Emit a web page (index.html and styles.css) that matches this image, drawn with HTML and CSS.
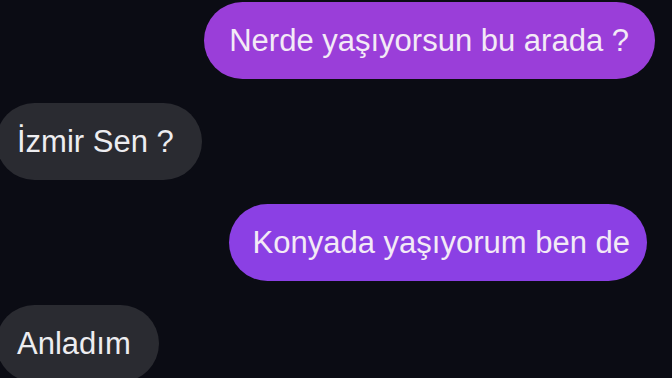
FILE: index.html
```html
<!DOCTYPE html>
<html lang="tr">
<head>
  <meta charset="UTF-8">
  <meta name="viewport" content="width=device-width, initial-scale=1">
  <title>Mesajlar</title>
  <link rel="stylesheet" href="styles.css">
</head>
<body>

  <div class="chat">
    <div class="row row-out">
      <div class="bubble bubble-out first">Nerde yaşıyorsun bu arada ?</div>
    </div>
    <div class="row row-in">
      <div class="bubble bubble-in">İzmir Sen ?</div>
    </div>
    <div class="row row-out">
      <div class="bubble bubble-out second">Konyada yaşıyorum ben de</div>
    </div>
    <div class="row row-in">
      <div class="bubble bubble-in">Anladım</div>
    </div>
  </div>

</body>
</html>
```

FILE: styles.css
```css
body {
  font-family: "Liberation Sans", Arial, sans-serif;
  margin: 0;
  padding: 0;
  height: 100vh;
  overflow: hidden;
  background-color: #0b0c14;
}

.chat {
  display: flex;
  flex-direction: column;
  gap: 24px;
  padding-top: 2px;
}

.row {
  display: flex;
}

.row-out {
  justify-content: flex-end;
}

.row-in {
  justify-content: flex-start;
}

.bubble {
  height: 77px;
  line-height: 77px;
  font-size: 31px;
  border-radius: 39px;
  padding: 0 24px;
  white-space: nowrap;
}

.bubble-out {
  color: #f3eaf6;
  background-color: #9a3ed9;
}

.bubble-out.first {
  margin-right: 17px;
  padding-left: 25px;
  padding-right: 26px;
}

.bubble-out.second {
  margin-right: 25px;
  background-color: #8b40e4;
  padding-right: 17px;
}

.bubble-in {
  color: #ededf0;
  background-color: #2a2b31;
  margin-left: -4px;
  padding-left: 21px;
  padding-right: 28px;
}
```
